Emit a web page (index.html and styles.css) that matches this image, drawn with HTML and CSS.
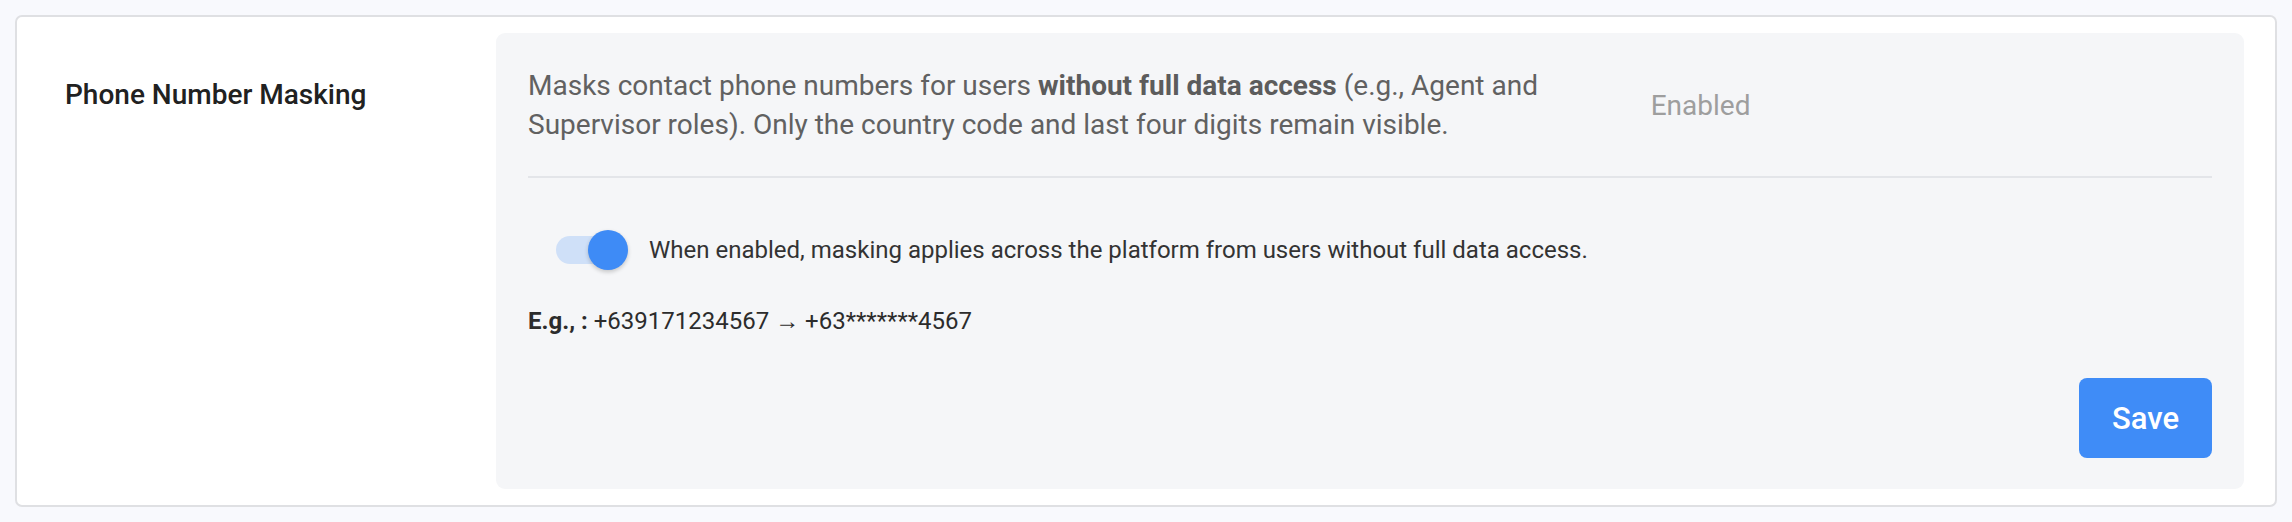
FILE: index.html
```html
<!DOCTYPE html>
<html lang="en">
<head>
<meta charset="utf-8">
<title>Phone Number Masking</title>
<link rel="stylesheet" href="styles.css">
</head>
<body>
<div class="page">
  <section class="card">
    <div class="label-col">
      <h2 class="title">Phone Number Masking</h2>
    </div>
    <div class="panel">
      <div class="summary">
        <p class="desc">Masks contact phone numbers for users <strong>without full data access</strong> (e.g., Agent and Supervisor roles). Only the country code and last four digits remain visible.</p>
        <div class="status">Enabled</div>
      </div>
      <hr class="divider">
      <div class="toggle-row">
        <span class="switch" role="switch" aria-checked="true">
          <span class="track"></span>
          <span class="thumb"></span>
        </span>
        <span class="toggle-text">When enabled, masking applies across the platform from users without full data access.</span>
      </div>
      <p class="example"><strong>E.g., :</strong> +639171234567 → +63*******4567</p>
      <div class="actions">
        <button class="save" type="button">Save</button>
      </div>
    </div>
  </section>
</div>
</body>
</html>
```
FILE: styles.css
```css
* { box-sizing: border-box; }
html, body { margin: 0; padding: 0; }
body {
  background: #f8f9fd;
  font-family: Roboto, "Liberation Sans", Arial, sans-serif;
  width: 2292px;
  height: 522px;
}
.page {
  padding: 15px;
  height: 522px;
}
.card {
  display: flex;
  height: 492px;
  background: #ffffff;
  border: 2px solid #dfe0e3;
  border-radius: 7px;
  padding: 16px 31px 16px 0;
}
.label-col {
  width: 479px;
  flex: none;
  padding-left: 48px;
}
.title {
  margin: 0;
  padding-top: 46px;
  font-size: 28px;
  font-weight: 500;
  line-height: 32px;
  color: #212121;
}
.panel {
  flex: 1;
  background: #f5f6f8;
  border-radius: 9px;
  padding: 33px 32px 31px 32px;
  display: flex;
  flex-direction: column;
}
.summary {
  display: grid;
  grid-template-columns: 2fr 1fr;
  align-items: center;
}
.desc {
  margin: 0;
  padding-right: 50px;
  font-size: 28px;
  line-height: 39px;
  color: #616161;
}
.desc strong { font-weight: 700; color: #5c5c5c; }
.status {
  font-size: 28px;
  color: #9e9e9e;
}
.divider {
  margin: 32px 0 0 0;
  border: 0;
  height: 2px;
  background: #e3e5e9;
}
.toggle-row {
  display: flex;
  align-items: center;
  margin-top: 52px;
  padding-left: 28px;
  gap: 21px;
}
.switch {
  position: relative;
  width: 72px;
  height: 40px;
  flex: none;
}
.track {
  position: absolute;
  left: 0;
  top: 6px;
  width: 58px;
  height: 28px;
  border-radius: 14px;
  background: #cfe0f8;
}
.thumb {
  position: absolute;
  right: 0;
  top: 0;
  width: 40px;
  height: 40px;
  border-radius: 50%;
  background: #3e8bf6;
  box-shadow: 0 2px 4px rgba(0,0,0,0.2);
}
.toggle-text {
  font-size: 24px;
  color: #333333;
}
.example {
  margin: 37px 0 0 0;
  font-size: 24px;
  color: #2c2c2c;
}
.example strong { font-weight: 700; }
.actions {
  margin-top: auto;
  display: flex;
  justify-content: flex-end;
}
.save {
  width: 133px;
  height: 80px;
  border: 0;
  border-radius: 8px;
  background: #3f8cf7;
  color: #ffffff;
  font-family: Roboto, "Liberation Sans", Arial, sans-serif;
  font-size: 31px;
  font-weight: 500;
}
```
